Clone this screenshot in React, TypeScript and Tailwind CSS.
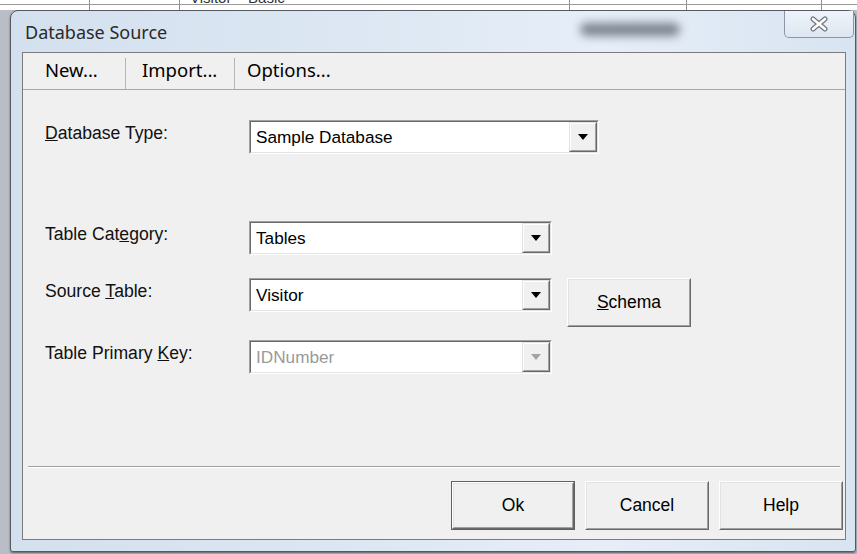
import React from 'react';

const ui = { fontFamily: '"Liberation Sans", Arial, sans-serif' };
const chrome = { fontFamily: '"Noto Sans", "Open Sans", sans-serif' };

function Arrow({ disabled }: { disabled?: boolean }) {
  return (
    <svg width="10" height="6" viewBox="0 0 10 6">
      <polygon points="0,0 10,0 5,6" fill={disabled ? '#a3a3a3' : '#000'} />
    </svg>
  );
}

// classic sunken combo box with a raised drop button
function Combo({ value, width, disabled }: { value: string; width: string; disabled?: boolean }) {
  return (
    <div className={`${width} h-[34px] border border-t-[#a0a0a0] border-l-[#a0a0a0] border-b-white border-r-white`}>
      <div className="flex h-full border border-t-[#696969] border-l-[#696969] border-b-[#e3e3e3] border-r-[#e3e3e3] bg-white">
        <div className={`flex-1 flex items-center pl-[5px] pt-[2px] text-[17.2px] ${disabled ? 'text-[#9a9a9a]' : 'text-black'}`}>
          {value}
        </div>
        <div className="w-[28px] h-full border border-t-[#e3e3e3] border-l-[#e3e3e3] border-b-[#696969] border-r-[#696969]">
          <div className="w-full h-full flex items-center justify-center border border-t-white border-l-white border-b-[#a0a0a0] border-r-[#a0a0a0] bg-[#f0f0f0]">
            <Arrow disabled={disabled} />
          </div>
        </div>
      </div>
    </div>
  );
}

function PushButton({ children, isDefault }: { children: React.ReactNode; isDefault?: boolean }) {
  const face = (
    <div className="w-full h-full border border-t-white border-l-white border-b-[#696969] border-r-[#696969]">
      <div className="w-full h-full flex items-center justify-center border border-t-[#e3e3e3] border-l-[#e3e3e3] border-b-[#a0a0a0] border-r-[#a0a0a0] bg-[#f0f0f0] text-[17.5px] text-black">
        {children}
      </div>
    </div>
  );
  if (isDefault) {
    return <div className="w-[124px] h-[49px] border border-[#5f5f5f]">{face}</div>;
  }
  return <div className="w-[124px] h-[49px]">{face}</div>;
}

function Label({ children }: { children: React.ReactNode }) {
  return <div className="w-[204px] pt-[3px] text-[17.6px] leading-[20px] text-[#111]">{children}</div>;
}

function CloseGlyph() {
  return (
    <svg width="20" height="16" viewBox="0 0 20 16">
      <path d="M4 3 L16 13 M16 3 L4 13" stroke="#6f7680" strokeWidth="5" strokeLinecap="round" />
      <path d="M4 3 L16 13 M16 3 L4 13" stroke="#fdfdfd" strokeWidth="2.6" strokeLinecap="round" />
    </svg>
  );
}

export default function App() {
  return (
    <div className="w-[857px] h-[554px] overflow-hidden bg-[#b9bec6] relative" style={ui}>
      {/* sliver of the grid behind the dialog */}
      <div className="h-[10px] bg-white relative overflow-hidden">
        <div className="absolute left-0 right-0 top-[4px] h-px bg-[#9a9a9a]" />
        <div className="flex h-full">
          <div className="w-[90px] border-r border-[#8f8f8f]" />
          <div className="w-[90px] border-r border-[#8f8f8f]" />
          <div className="w-[390px] border-r border-[#8f8f8f] -mt-[13px] pl-[10px] text-[15px] text-[#333]">Visitor&nbsp;&nbsp;&nbsp;&nbsp;Basic</div>
          <div className="w-[117px] border-r border-[#8f8f8f]" />
          <div className="w-[135px] border-r border-[#8f8f8f]" />
        </div>
      </div>

      <div className="ml-[10px] w-[846px] h-[542px] rounded-t-[8px] rounded-b-[3px] border border-[#555a61] bg-[linear-gradient(90deg,#d3e0ee,#dce7f3_40%,#e6eef8_70%,#d8e4f1)] pl-[11px] pr-[9px] pb-[11px] flex flex-col shadow-[0_1px_2px_rgba(0,0,0,0.5)]">
        {/* title bar */}
        <div className="h-[41px] flex items-start justify-between relative">
          <div className="pl-[3px] pt-[10px] text-[18px] leading-[22px] text-[#2a2a2a]" style={chrome}>
            Database Source
          </div>
          <div className="absolute left-[558px] top-[12px] w-[100px] h-[13px] rounded-full bg-[#56606c] blur-[5px] opacity-75" />
          <div className="w-[70px] h-[27px] -mr-[8px] rounded-b-[5px] border border-t-0 border-[#8a96a5] bg-[linear-gradient(180deg,#eef3f9,#dde6f1)] flex items-center justify-center">
            <CloseGlyph />
          </div>
        </div>

        {/* client area */}
        <div className="h-[488px] border border-[#7c7c7c] bg-[#f0f0f0] flex flex-col">
          <div className="h-[37px] flex border-b border-[#a7a7a7] text-[18.5px] leading-[24px] text-black" style={chrome}>
            <div className="w-[103px] pl-[22px] border-r border-[#b5b5b5] mt-[5px]">New...</div>
            <div className="w-[109px] pl-[16px] border-r border-[#b5b5b5] mt-[5px]">Import...</div>
            <div className="pl-[12px] mt-[5px]">Options...</div>
          </div>

          <div className="flex-1 flex flex-col pl-[22px]">
            <div className="flex mt-[30px]">
              <Label><span className="underline">D</span>atabase Type:</Label>
              <Combo value="Sample Database" width="w-[350px]" />
            </div>
            <div className="flex mt-[67px]">
              <Label>Table Cat<span className="underline">e</span>gory:</Label>
              <Combo value="Tables" width="w-[303px]" />
            </div>
            <div className="flex mt-[23px] items-start">
              <Label>Source <span className="underline">T</span>able:</Label>
              <Combo value="Visitor" width="w-[303px]" />
              <div className="ml-[15px]">
                <PushButton><span className="underline">S</span>chema</PushButton>
              </div>
            </div>
            <div className="flex mt-[13px]">
              <Label>Table Primary <span className="underline">K</span>ey:</Label>
              <Combo value="IDNumber" width="w-[303px]" disabled />
            </div>
          </div>

          {/* etched separator and dialog buttons */}
          <div className="mx-[5px] h-[2px] border-t border-[#a0a0a0] border-b border-b-white" />
          <div className="flex justify-end gap-[10px] pr-[2px] pt-[13px] pb-[9px]">
            <PushButton isDefault>Ok</PushButton>
            <PushButton>Cancel</PushButton>
            <PushButton>Help</PushButton>
          </div>
        </div>
      </div>
    </div>
  );
}
